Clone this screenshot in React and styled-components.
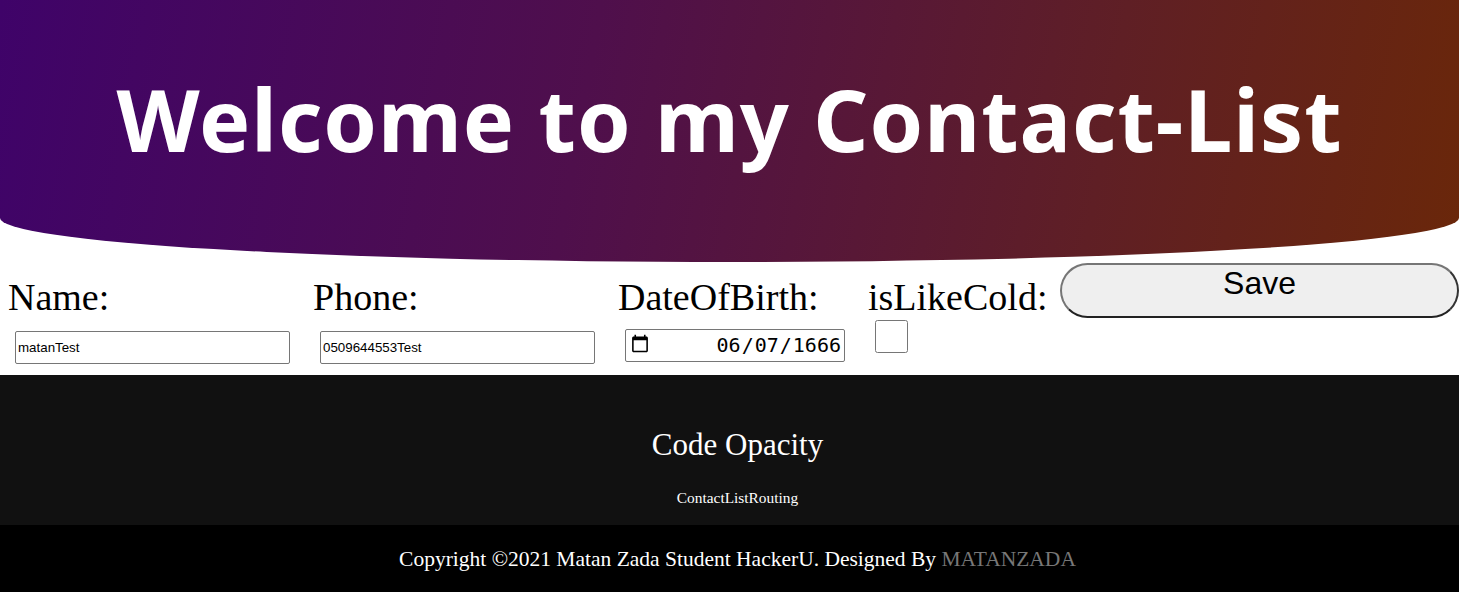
import styled, { createGlobalStyle } from "styled-components";

const GlobalStyle = createGlobalStyle`
  body {
    margin: 0;
    font-family: "Liberation Serif", "Times New Roman", serif;
    background: #fff;
  }
`;

const Header = styled.header`
  height: 262px;
  display: flex;
  align-items: center;
  justify-content: center;
  padding-bottom: 26px;
  box-sizing: border-box;
  background: linear-gradient(100deg, #3f0369 0%, #4f0f4c 40%, #5f1f25 75%, #6a270a 100%);
  border-radius: 0 0 50% 50% / 0 0 44px 44px;
`;

const Title = styled.h1`
  margin: 0;
  color: #fff;
  font-family: "Comic Sans MS", "Noto Sans", sans-serif;
  font-weight: 700;
  font-size: 86px;
  letter-spacing: 1px;
`;

const FormRow = styled.form`
  display: flex;
  align-items: flex-start;
  min-height: 113px;
  padding-left: 8px;
  box-sizing: border-box;
`;

const Field = styled.div`
  width: ${(p) => p.$w}px;
  display: flex;
  flex-direction: column;
  align-items: flex-start;
`;

const Label = styled.label`
  margin-top: 14px;
  font-size: 38px;
  color: #000;
  line-height: 1.15;
`;

const TextInput = styled.input`
  margin: ${(p) => p.$top}px 0 0 7px;
  width: 275px;
  height: 33px;
  box-sizing: border-box;
  border: 1px solid #767676;
  border-radius: 2px;
  padding: 1px 2px;
  font-family: "Liberation Sans", Arial, sans-serif;
  font-size: 13.33px;
  color: #000;
`;

const DateInput = styled.input`
  margin: 9px 0 0 7px;
  width: 220px;
  height: 33px;
  box-sizing: border-box;
  border: 1px solid #767676;
  border-radius: 2px;
  padding: 1px 2px 1px 4px;
  font-family: "DejaVu Sans Mono", "Liberation Mono", monospace;
  font-size: 20px;
  color: #000;
  &::-webkit-datetime-edit {
    flex: 1;
    text-align: right;
  }
  &::-webkit-datetime-edit-fields-wrapper {
    margin-left: auto;
  }
  &::-webkit-calendar-picker-indicator {
    order: -1;
    width: 20px;
    height: 22px;
    margin: 0 2px 0 0;
    padding: 0;
    background-size: contain;
  }
`;

const CheckBox = styled.input`
  margin: 0 0 0 7px;
  width: 33px;
  height: 33px;
`;

const SaveButton = styled.button`
  margin-top: 1px;
  flex: 1;
  height: 55px;
  box-sizing: border-box;
  padding: 0 0 14px;
  background: #efefef;
  border: 2px solid;
  border-color: #767676 #333 #222 #767676;
  border-radius: 28px;
  font-family: "Liberation Sans", Arial, sans-serif;
  font-size: 32px;
  color: #000;
  line-height: 37px;
`;

const Footer = styled.footer`
  background: #111;
  color: #fff;
  text-align: center;
  padding: 52px 0 19px 16px;
`;

const FooterTitle = styled.h2`
  margin: 0;
  font-size: 31px;
  font-weight: 400;
  line-height: 1.15;
`;

const FooterLink = styled.p`
  margin: 26px 0 0;
  font-size: 15.4px;
  line-height: 1.15;
`;

const CopyBar = styled.div`
  background: #000;
  color: #fff;
  text-align: center;
  font-size: 21.5px;
  line-height: 1.15;
  padding: 22px 0 20px 16px;
`;

const Muted = styled.span`
  color: #777;
`;

export default function App() {
  return (
    <>
      <GlobalStyle />
      <Header>
        <Title>Welcome to my Contact-List</Title>
      </Header>
      <FormRow onSubmit={(e) => e.preventDefault()}>
        <Field $w={305}>
          <Label>Name:</Label>
          <TextInput $top={11} type="text" defaultValue="matanTest" />
        </Field>
        <Field $w={305}>
          <Label>Phone:</Label>
          <TextInput $top={11} type="text" defaultValue="0509644553Test" />
        </Field>
        <Field $w={250}>
          <Label>DateOfBirth:</Label>
          <DateInput type="date" defaultValue="1666-06-07" />
        </Field>
        <Field $w={192}>
          <Label>isLikeCold:</Label>
          <CheckBox type="checkbox" />
        </Field>
        <SaveButton type="submit">Save</SaveButton>
      </FormRow>
      <Footer>
        <FooterTitle>Code Opacity</FooterTitle>
        <FooterLink>ContactListRouting</FooterLink>
      </Footer>
      <CopyBar>
        Copyright ©2021 Matan Zada Student HackerU. Designed By <Muted>MATANZADA</Muted>
      </CopyBar>
    </>
  );
}
